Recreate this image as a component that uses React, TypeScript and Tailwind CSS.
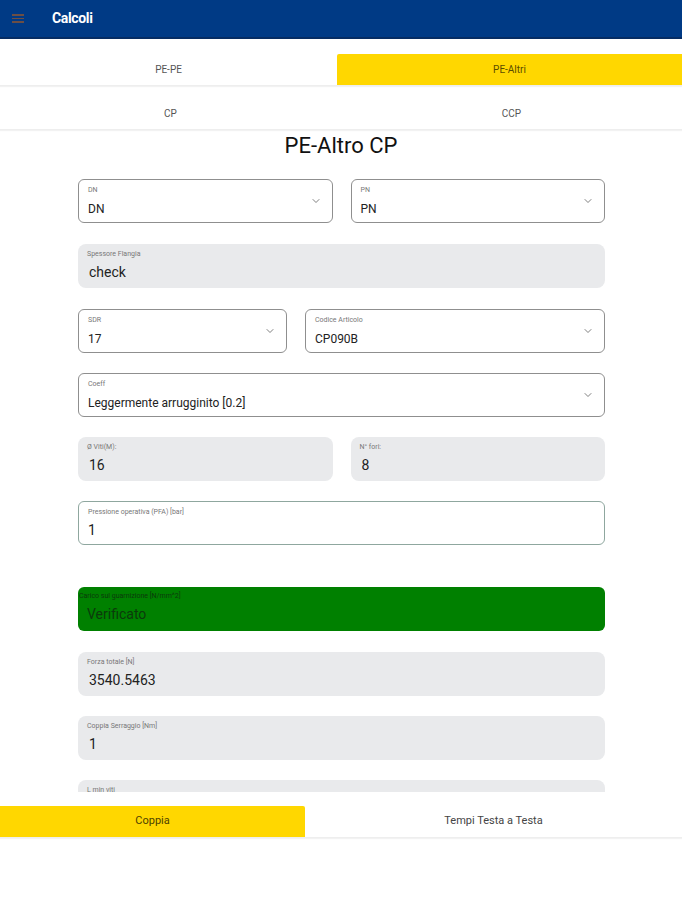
import { ChevronDown } from 'lucide-react';

type FieldProps = {
  label: string;
  value: string;
  variant?: 'outline' | 'filled' | 'green';
  select?: boolean;
  className?: string;
  big?: boolean;
};

const Field = ({ label, value, variant = 'outline', select, className = '', big }: FieldProps) => {
  const base =
    variant === 'outline'
      ? 'border border-[#8f8f8f] rounded-md bg-white'
      : variant === 'green'
        ? 'bg-[#008000] rounded-md'
        : 'bg-[#e9eaec] rounded-lg';
  return (
    <div className={`relative h-[44px] flex flex-col justify-start ${base} ${className}`}>
      <span
        className={`text-[7px] leading-none ${variant === 'green' ? 'pl-[1px] pt-[6px] text-[#0b3a0b]' : 'pl-[9px] pt-[7px] text-[#777]'}`}
      >
        {label}
      </span>
      <span
        className={`leading-none ${big ? 'text-[14px] pt-[7px]' : 'text-[12px] pt-[9px]'} ${
          variant === 'green' ? 'pl-[9px] text-[#0b3a0b]' : variant === 'filled' ? 'pl-[11px] text-[#222]' : 'pl-[9px] text-[#222]'
        }`}
      >
        {value}
      </span>
      {select && <ChevronDown className="absolute right-[10px] top-[15px] w-[12px] h-[12px] text-[#555]" strokeWidth={1.5} />}
    </div>
  );
};

export default function App() {
  return (
    <div className="w-[682px] h-[900px] bg-white font-['Roboto',sans-serif] overflow-hidden flex flex-col">
      <header className="h-[39px] bg-[#003a85] border-b-2 border-[#062c63] flex items-center shrink-0">
        <div className="w-[52px] pl-[12px] flex flex-col gap-[2px]">
          <span className="block w-[12px] h-[1.5px] bg-[#6b4e45]" />
          <span className="block w-[12px] h-[1.5px] bg-[#6b4e45]" />
          <span className="block w-[12px] h-[1.5px] bg-[#6b4e45]" />
        </div>
        <h1 className="text-white font-bold text-[14px] tracking-tight">Calcoli</h1>
      </header>

      <div className="h-[15px] shrink-0" />

      <nav className="flex h-[32px] shrink-0 border-b border-[#eee] shadow-[0_1px_1px_rgba(0,0,0,0.05)]">
        <button className="w-[337px] text-[10px] text-[#555]">PE-PE</button>
        <button className="flex-1 bg-[#ffd700] text-[10px] text-[#5a4c00] rounded-tl-[2px]">PE-Altri</button>
      </nav>

      <nav className="flex h-[32px] mt-[12px] shrink-0 border-b border-[#eee] shadow-[0_1px_1px_rgba(0,0,0,0.05)]">
        <button className="w-[341px] text-[10px] text-[#555]">CP</button>
        <button className="flex-1 text-[10px] text-[#555]">CCP</button>
      </nav>

      <main className="h-[662px] overflow-hidden shrink-0">
        <h2 className="text-center text-[22px] text-[#111] leading-none mt-[5px] mb-[22px]">PE-Altro CP</h2>
        <div className="w-[527px] ml-[78px] flex flex-col">
          <div className="flex gap-[18px]">
            <Field label="DN" value="DN" select className="flex-1" />
            <Field label="PN" value="PN" select className="flex-1" />
          </div>
          <Field label="Spessore Flangia" value="check" variant="filled" big className="mt-[21px]" />
          <div className="flex gap-[18px] mt-[21px]">
            <Field label="SDR" value="17" select className="w-[209px]" />
            <Field label="Codice Articolo" value="CP090B" select className="flex-1" />
          </div>
          <Field label="Coeff" value="Leggermente arrugginito [0.2]" select className="mt-[20px]" />
          <div className="flex gap-[18px] mt-[20px]">
            <Field label="Ø Viti(M):" value="16" variant="filled" big className="flex-1" />
            <Field label="N° fori:" value="8" variant="filled" big className="flex-1" />
          </div>
          <Field label="Pressione operativa (PFA) [bar]" value="1" big className="mt-[20px] !border-[#8fa79f]" />
          <Field label="Carico sul guarnizione [N/mm^2]" value="Verificato" variant="green" big className="mt-[42px]" />
          <Field label="Forza totale [N]" value="3540.5463" variant="filled" big className="mt-[21px]" />
          <Field label="Coppia Serraggio [Nm]" value="1" variant="filled" big className="mt-[20px]" />
          <Field label="L min viti" value="" variant="filled" big className="mt-[20px]" />
        </div>
      </main>

      <div className="h-[14px] shrink-0" />

      <nav className="flex h-[32px] shrink-0 border-b border-[#eee] shadow-[0_1px_1px_rgba(0,0,0,0.05)]">
        <button className="w-[305px] bg-[#ffd700] text-[11px] text-[#4d4200] rounded-tr-[2px]">Coppia</button>
        <button className="flex-1 text-[11px] text-[#444]">Tempi Testa a Testa</button>
      </nav>
    </div>
  );
}
